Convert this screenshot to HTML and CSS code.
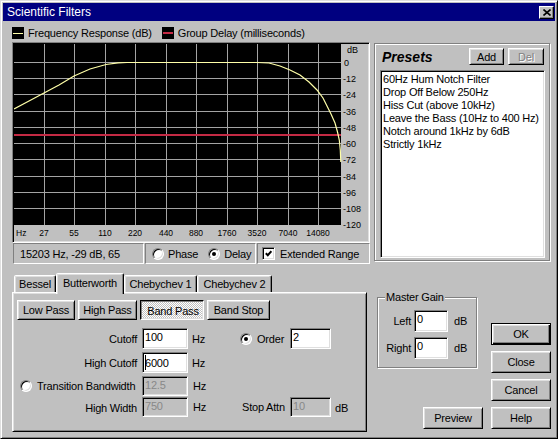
FILE: index.html
```html
<!DOCTYPE html>
<html>
<head>
<meta charset="utf-8">
<title>Scientific Filters</title>
<link rel="stylesheet" href="styles.css">
</head>
<body>
<div class="window">
  <div class="titlebar">
    <span class="title">Scientific Filters</span>
    <span class="closebtn"><svg width="8" height="7" viewBox="0 0 8 7"><path d="M0.5 0.5L7.5 6.5M7.5 0.5L0.5 6.5" stroke="#000" stroke-width="1.6"/></svg></span>
  </div>
  <div class="body">
    <div class="top">
      <div class="leftcol">
        <div class="legend">
          <span class="lgbox yellow"></span><span class="lgtext">Frequency Response (dB)</span>
          <span class="lgbox red"></span><span class="lgtext">Group Delay (milliseconds)</span>
        </div>
        <div class="graph">
          <svg width="354" height="197" viewBox="0 0 354 197">
            <rect x="0" y="0" width="327" height="181" fill="#000"/>
            <path d="M30.5 0V181M60.5 0V181M91.5 0V181M121.5 0V181M152.5 0V181M182.5 0V181M213.5 0V181M243.5 0V181M274.5 0V181M304.5 0V181M0 18.5H327M0 34.5H327M0 50.5H327M0 67.5H327M0 83.5H327M0 99.5H327M0 115.5H327M0 132.5H327M0 148.5H327M0 164.5H327" stroke="#a4a4a4" stroke-width="1" fill="none"/>
            <line x1="0" y1="91" x2="327" y2="91" stroke="#c42a44" stroke-width="2"/>
            <polyline points="0,65 15,57 30,49 45,41 60,32 76,25 92,20.5 104,18.8 113,18.5 243,18.5 255,19 266,22 276,26 286,31 295,38 303,46 309,54 313,62 317,70 321,79 323.5,88 325.3,96 326.3,106 326.8,118" fill="none" stroke="#ffffa8" stroke-width="1.2"/>
            <g class="ylab">
              <text x="333" y="9">dB</text>
              <text x="330" y="21.5">0</text>
              <text x="329" y="37.5">-12</text>
              <text x="329" y="53.5">-24</text>
              <text x="329" y="70.5">-36</text>
              <text x="329" y="86.5">-48</text>
              <text x="329" y="102.5">-60</text>
              <text x="329" y="118.5">-72</text>
              <text x="329" y="135.5">-84</text>
              <text x="329" y="151.5">-96</text>
              <text x="329" y="167.5">-108</text>
              <text x="329" y="183.5">-120</text>
            </g>
            <g class="xlab">
              <text class="hzunit" x="2" y="192">Hz</text>
              <text x="30" y="192">27</text>
              <text x="60" y="192">55</text>
              <text x="91" y="192">110</text>
              <text x="121" y="192">220</text>
              <text x="152" y="192">440</text>
              <text x="182" y="192">880</text>
              <text x="213" y="192">1760</text>
              <text x="243" y="192">3520</text>
              <text x="274" y="192">7040</text>
              <text x="304" y="192">14080</text>
            </g>
          </svg>
        </div>
        <div class="status">
          <div class="sbox s1">15203 Hz, -29 dB, 65</div>
          <div class="sbox s2"><span class="radio"></span><span class="rl">Phase</span><span class="radio on gap"></span><span class="rl">Delay</span></div>
          <div class="sbox s3"><span class="check"><svg width="7" height="7" viewBox="0 0 7 7"><path d="M0.8 3.2L2.8 5.2L6.4 1.2" stroke="#000" stroke-width="2" fill="none"/></svg></span><span class="cl">Extended Range</span></div>
        </div>
      </div>
      <div class="presets">
        <div class="phead">
          <span class="ptitle">Presets</span>
          <span class="btn small add">Add</span>
          <span class="btn small del disabled">Del</span>
        </div>
        <ul class="plist">
          <li>60Hz Hum Notch Filter</li>
          <li>Drop Off Below 250Hz</li>
          <li>Hiss Cut (above 10kHz)</li>
          <li>Leave the Bass (10Hz to 400 Hz)</li>
          <li>Notch around 1kHz by 6dB</li>
          <li>Strictly 1kHz</li>
        </ul>
      </div>
    </div>
    <div class="bottom">
      <div class="tabctl">
        <div class="tabstrip">
          <div class="tab w-bessel">Bessel</div>
          <div class="tab sel w-butter">Butterworth</div>
          <div class="tab w-c1">Chebychev 1</div>
          <div class="tab w-c2">Chebychev 2</div>
        </div>
        <div class="tabpanel">
          <div class="typerow">
            <span class="btn w-low">Low Pass</span>
            <span class="btn w-high">High Pass</span>
            <span class="btn pressed w-bpass">Band Pass</span>
            <span class="btn w-bstop">Band Stop</span>
          </div>
          <div class="form">
            <span class="lab">Cutoff</span>
            <span class="edit">100</span>
            <span class="unit">Hz</span>
            <span class="opt"><span class="radio on"></span><span class="rl">Order</span></span>
            <span class="edit">2</span>
            <span></span>

            <span class="lab">High Cutoff</span>
            <span class="edit"><span class="caret"></span>6000</span>
            <span class="unit">Hz</span>
            <span></span><span></span><span></span>

            <span class="lab tb"><span class="radio"></span><span class="rl">Transition Bandwidth</span></span>
            <span class="edit dis">12.5</span>
            <span class="unit u2">Hz</span>
            <span></span><span></span><span></span>

            <span class="lab">High Width</span>
            <span class="edit dis">750</span>
            <span class="unit u2">Hz</span>
            <span class="opt sa">Stop Attn</span>
            <span class="edit dis">10</span>
            <span class="unit">dB</span>
          </div>
        </div>
      </div>
      <div class="side">
        <div class="gaincol">
          <fieldset class="gain">
            <legend>Master Gain</legend>
            <div class="ggrid">
              <span class="glab">Left</span><span class="edit">0</span><span class="gunit">dB</span>
              <span class="glab">Right</span><span class="edit">0</span><span class="gunit">dB</span>
            </div>
          </fieldset>
          <span class="btn big preview">Preview</span>
        </div>
        <div class="btncol">
          <span class="btn big default">OK</span>
          <span class="btn big">Close</span>
          <span class="btn big">Cancel</span>
          <span class="btn big">Help</span>
        </div>
      </div>
    </div>
  </div>
</div>
</body>
</html>
```

FILE: styles.css
```css
* { box-sizing: border-box; margin: 0; padding: 0; }
html, body { margin: 0; background: #c0c0c0; }
body {
  font-family: "Liberation Sans", Arial, sans-serif;
  font-size: 11px;
  letter-spacing: -0.2px;
  color: #000;
}
.window {
  width: 558px;
  height: 439px;
  border: 1px solid;
  border-color: #dfdfdf #000 #000 #dfdfdf;
  box-shadow: inset 1px 1px #fff, inset -1px -1px #808080;
  padding: 2px;
  background: #c0c0c0;
  display: flex;
  flex-direction: column;
}
.titlebar {
  height: 18px;
  background: #000080;
  color: #fff;
  display: flex;
  align-items: center;
  justify-content: space-between;
  padding-left: 4px;
  padding-right: 1px;
}
.title { font-size: 12px; letter-spacing: 0; }
.closebtn {
  width: 15px;
  height: 13px;
  background: #c0c0c0;
  border: 1px solid;
  border-color: #fff #000 #000 #fff;
  box-shadow: inset -1px -1px #808080;
  display: flex;
  align-items: center;
  justify-content: center;
}
.closebtn svg { display: block; }
.body {
  flex: 1;
  padding-left: 9px;
  display: flex;
  flex-direction: column;
}
.top { display: flex; gap: 4px; }
.leftcol { width: 358px; display: flex; flex-direction: column; }
.legend {
  margin-top: 5px;
  height: 14px;
  display: flex;
  align-items: center;
}
.lgbox {
  width: 12px;
  height: 12px;
  background: #000;
  display: flex;
  align-items: center;
  padding: 0 1px;
}
.lgbox::after { content: ""; flex: 1; height: 1px; }
.lgbox.yellow::after { background: #ffffa8; }
.lgbox.red::after { background: #c42a44; height: 2px; }
.lgtext { margin-left: 4px; margin-right: 10px; }
.graph {
  margin-top: 2px;
  height: 201px;
  border: 1px solid;
  border-color: #808080 #fff #fff #808080;
  box-shadow: inset 1px 1px #000, inset -1px -1px #dfdfdf;
  padding: 1px;
}
.graph svg { display: block; }
.graph text {
  font-family: "Liberation Sans", Arial, sans-serif;
  letter-spacing: 0;
  fill: #000;
}
.ylab text { font-size: 9px; }
.xlab text { font-size: 8.5px; text-anchor: middle; }
.xlab text.hzunit { text-anchor: start; }
.status {
  height: 21px;
  display: flex;
  gap: 1px;
  margin-left: 1px;
}
.sbox {
  border: 1px solid;
  border-color: #808080 #fff #fff #808080;
  display: flex;
  align-items: center;
}
.s1 { width: 131px; padding-left: 6px; }
.s2 { width: 111px; padding-left: 6px; }
.s3 { width: 113px; padding-left: 4px; }
.rl { margin-left: 4px; }
.radio.gap { margin-left: 10px; }
.cl { margin-left: 5px; }
.radio {
  display: inline-block;
  flex: none;
  width: 12px;
  height: 12px;
  border-radius: 50%;
  background: #fff;
  border: 1px solid;
  border-color: #808080 #fff #fff #808080;
  box-shadow: inset 1px 1px #000, inset -1px -1px #dfdfdf;
  position: relative;
}
.radio.on::after {
  content: "";
  position: absolute;
  left: 3px;
  top: 3px;
  width: 4px;
  height: 4px;
  border-radius: 50%;
  background: #000;
}
.check {
  width: 13px;
  height: 13px;
  flex: none;
  background: #fff;
  border: 1px solid;
  border-color: #808080 #fff #fff #808080;
  box-shadow: inset 1px 1px #000, inset -1px -1px #dfdfdf;
  display: flex;
  align-items: center;
  justify-content: center;
}
.check svg { display: block; }

.presets {
  margin-top: 22px;
  width: 176px;
  height: 218px;
  border: 1px solid #808080;
  box-shadow: inset 1px 1px #fff, 1px 1px #fff;
  padding: 4px 4px 2px 5px;
  display: flex;
  flex-direction: column;
}
.phead { height: 17px; display: flex; align-items: center; }
.ptitle {
  font-size: 14px;
  font-weight: bold;
  font-style: italic;
  letter-spacing: 0;
  margin-left: 2px;
  flex: 1;
}
.btn {
  display: flex;
  align-items: center;
  justify-content: center;
  background: #c0c0c0;
  border: 1px solid;
  border-color: #fff #000 #000 #fff;
  box-shadow: inset 1px 1px #dfdfdf, inset -1px -1px #808080;
  flex: none;
}
.btn.small { height: 17px; }
.add { width: 35px; margin-right: 4px; }
.del { width: 36px; margin-right: 1px; }
.btn.disabled { color: #808080; text-shadow: 1px 1px #fff; }
.plist {
  list-style: none;
  margin-top: 5px;
  height: 188px;
  background: #fff;
  border: 1px solid;
  border-color: #808080 #fff #fff #808080;
  box-shadow: inset 1px 1px #000, inset -1px -1px #dfdfdf;
  padding: 2px 2px 0 2px;
}
.plist li { line-height: 13px; }

.bottom { display: flex; }
.tabctl { margin-top: 9px; width: 355px; display: flex; flex-direction: column; }
.tabstrip {
  height: 19px;
  display: flex;
  align-items: flex-end;
  padding-left: 2px;
}
.tab {
  height: 17px;
  border: 1px solid;
  border-bottom: none;
  border-color: #fff #000 transparent #fff;
  border-radius: 2px 2px 0 0;
  box-shadow: inset -1px 0 #808080, inset 1px 1px #dfdfdf;
  display: flex;
  align-items: center;
  justify-content: center;
  background: #c0c0c0;
}
.tab.sel {
  height: 21px;
  margin-bottom: -2px;
  position: relative;
  z-index: 1;
  padding-bottom: 2px;
}
.w-bessel { width: 42px; }
.w-butter { width: 68px; }
.w-c1 { width: 73px; }
.w-c2 { width: 75px; }
.tabpanel {
  height: 140px;
  border: 1px solid;
  border-color: #fff #000 #000 #fff;
  box-shadow: inset 1px 1px #dfdfdf, inset -1px -1px #808080;
  padding: 7px 0 0 1px;
}
.typerow { display: flex; gap: 3px; margin-left: 3px; height: 20px; }
.typerow .btn { height: 20px; }
.w-low { width: 58px; }
.w-high { width: 59px; }
.w-bpass { width: 64px; }
.w-bstop { width: 63px; }
.btn.pressed {
  border-color: #000 #fff #fff #000;
  box-shadow: inset 1px 1px #808080, inset -1px -1px #dfdfdf;
  background: repeating-conic-gradient(#fff 0 25%, #c0c0c0 0 50%) 0 0 / 2px 2px;
  padding: 2px 0 0 2px;
}
.form {
  margin-top: 8px;
  display: grid;
  grid-template-columns: 128px 46px 52px 50px 41px auto;
  grid-template-rows: 24px 24px 21px 20px;
}
.lab {
  height: 21px;
  display: flex;
  align-items: center;
  justify-content: flex-end;
  padding-right: 5px;
}
.lab.tb { justify-content: flex-start; padding-left: 6px; height: 20px; }
.lab.tb .rl { margin-left: 5px; }
.unit { height: 21px; display: flex; align-items: center; padding-left: 4px; }
.unit.u2 { padding-left: 5px; height: 20px; }
.opt { height: 21px; display: flex; align-items: center; }
.opt .rl { margin-left: 5px; }
.opt.sa { padding-left: 2px; height: 20px; }
.edit {
  display: block;
  height: 21px;
  background: #fff;
  border: 1px solid;
  border-color: #808080 #fff #fff #808080;
  box-shadow: inset 1px 1px #000, inset -1px -1px #dfdfdf;
  padding: 2px 2px 0 2px;
  line-height: 13px;
  white-space: nowrap;
}
.edit.dis { background: #c0c0c0; color: #888; height: 20px; }
.caret {
  display: inline-block;
  width: 1px;
  height: 15px;
  background: #000;
  vertical-align: -3px;
  margin-right: -1px;
}

.side { margin-left: 10px; margin-top: 27px; height: 138px; display: flex; }
.gaincol { width: 106px; display: flex; flex-direction: column; }
.gain {
  width: 100px;
  border: 1px solid #808080;
  box-shadow: inset 1px 1px #fff, 1px 1px #fff;
  padding: 0 0 8px 0;
  margin: 0;
  min-width: 0;
}
.gain legend {
  margin-left: 7px;
  padding: 0 1px;
  line-height: 12px;
  background: #c0c0c0;
}
.ggrid {
  margin-top: 7px;
  display: grid;
  grid-template-columns: 36px 34px auto;
  grid-auto-rows: 22px;
  row-gap: 5px;
}
.glab { display: flex; align-items: center; justify-content: flex-end; padding-right: 3px; }
.gunit { display: flex; align-items: center; padding-left: 6px; }
.ggrid .edit { height: 22px; }
.btn.big { width: 60px; height: 22px; }
.preview { margin-top: auto; align-self: flex-end; }
.btncol {
  margin-left: 8px;
  padding-top: 32px;
  display: flex;
  flex-direction: column;
  gap: 6px;
}
.btn.default {
  border-color: #000;
  box-shadow: inset 1px 1px #fff, inset -1px -1px #000, inset -2px -2px #808080, inset 2px 2px #dfdfdf;
}
```
